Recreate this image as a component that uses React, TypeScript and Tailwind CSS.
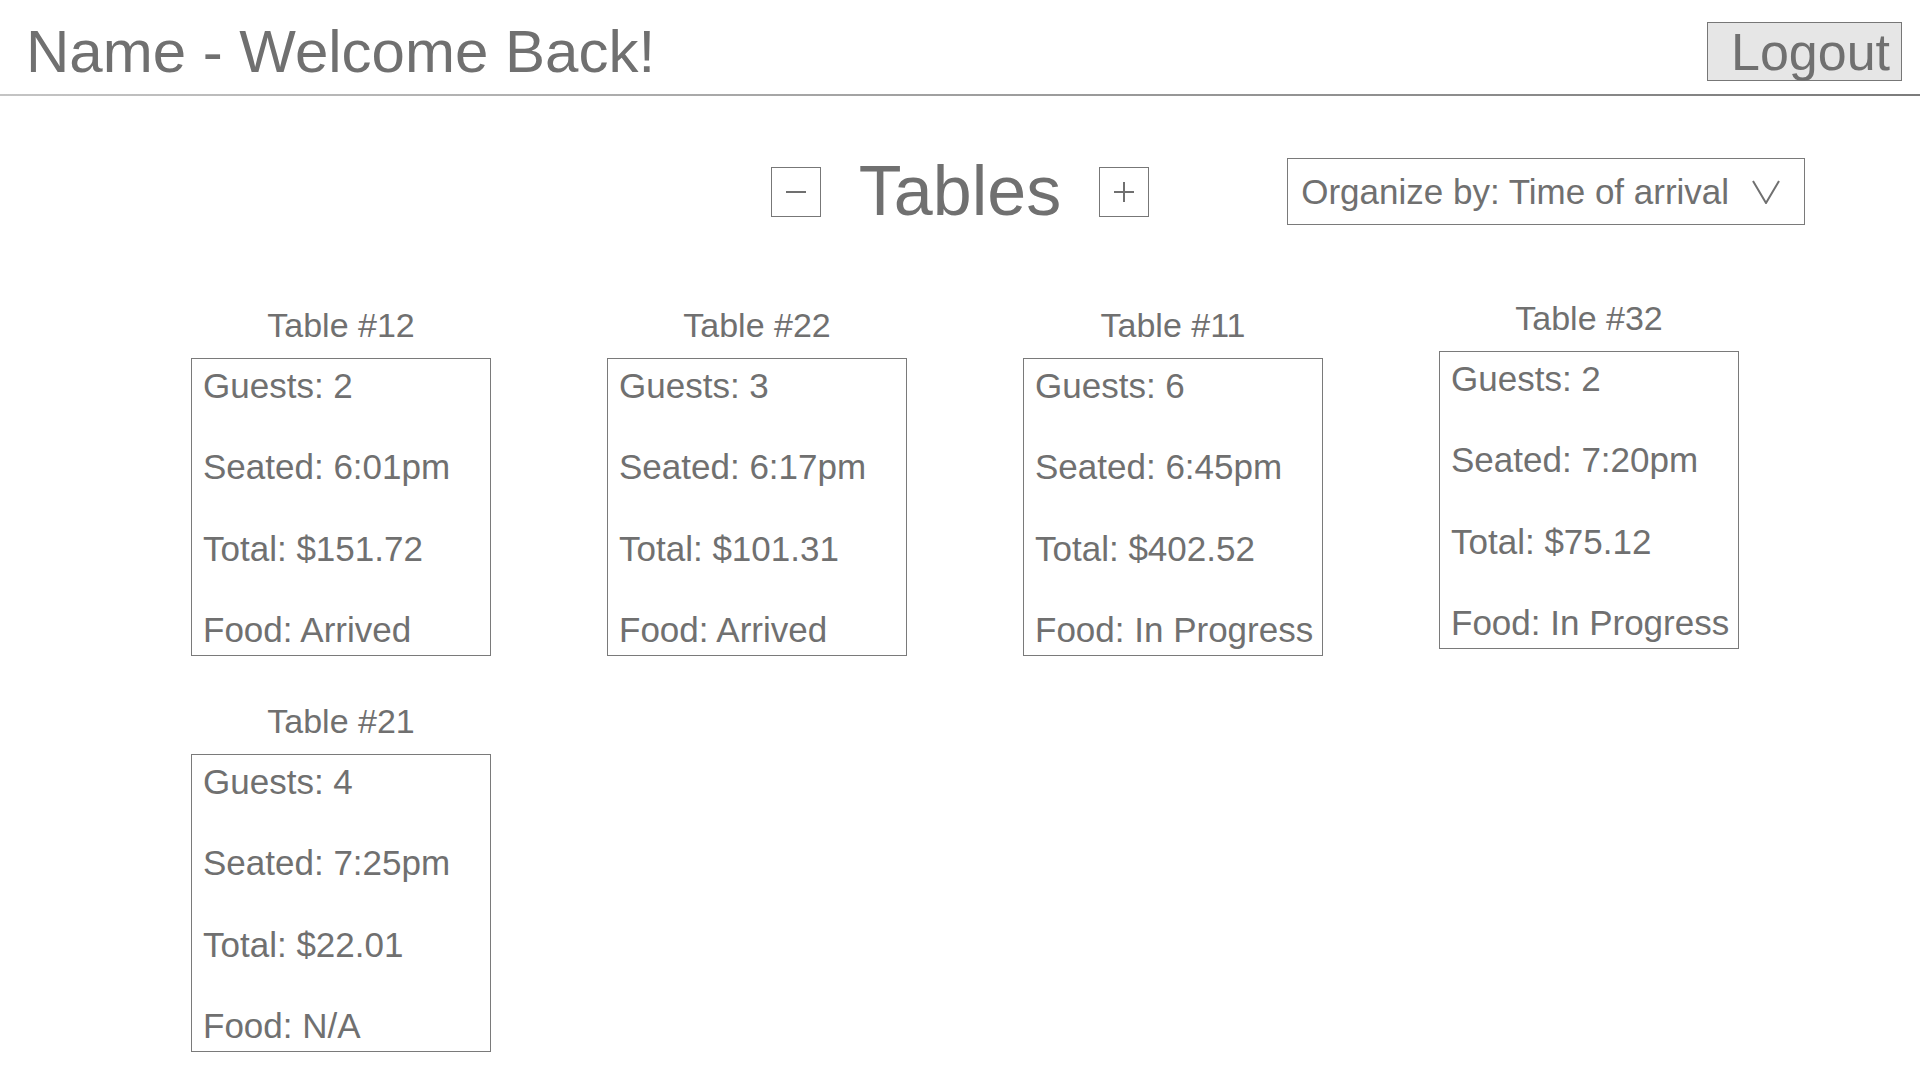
const TABLES = [
  { id: 12, guests: 2, seated: "6:01pm", total: "$151.72", food: "Arrived" },
  { id: 22, guests: 3, seated: "6:17pm", total: "$101.31", food: "Arrived" },
  { id: 11, guests: 6, seated: "6:45pm", total: "$402.52", food: "In Progress" },
  { id: 32, guests: 2, seated: "7:20pm", total: "$75.12", food: "In Progress" },
  { id: 21, guests: 4, seated: "7:25pm", total: "$22.01", food: "N/A" },
];

function TableCard({ table, raised }: { table: (typeof TABLES)[number]; raised?: boolean }) {
  return (
    <div className={raised ? "flex flex-col -mt-[7px]" : "flex flex-col"}>
      <div className="h-[40px] text-center text-[34px] leading-[40px]">Table #{table.id}</div>
      <div className="mt-[13px] flex h-[298px] w-[300px] flex-col justify-between border border-[#7a7a7a] px-[11px] pt-[7px] pb-[5px] text-[35px] leading-[40px] whitespace-nowrap">
        <div>Guests: {table.guests}</div>
        <div>Seated: {table.seated}</div>
        <div>Total: {table.total}</div>
        <div>Food: {table.food}</div>
      </div>
    </div>
  );
}

export default function App() {
  return (
    <div className="min-h-screen w-full bg-white font-['Liberation_Sans',Arial,sans-serif] text-[#707070]">
      <header className="flex h-[94px] items-start justify-between pt-[22px] pr-[18px] pl-[26px]">
        <h1 className="text-[60px] leading-[60px]">Name - Welcome Back!</h1>
        <button className="flex h-[59px] w-[195px] items-center border border-[#777777] bg-[#e6e6e6] pl-[23px] text-[52px] leading-none text-[#707070]">
          Logout
        </button>
      </header>
      <div className="h-[2px] w-full bg-gradient-to-r from-[#c4c4c4] to-[#7c7c7c]" />

      <div className="mt-[62px] grid grid-cols-[1fr_auto_1fr] items-center">
        <div />
        <div className="flex items-center">
          <button className="flex h-[50px] w-[50px] items-center justify-center border border-[#777777]">
            <svg width="22" height="22" viewBox="0 0 22 22">
              <line x1="1" y1="11" x2="21" y2="11" stroke="#707070" strokeWidth="2" />
            </svg>
          </button>
          <h2 className="mx-[38px] text-[70px] leading-[67px]">Tables</h2>
          <button className="flex h-[50px] w-[50px] items-center justify-center border border-[#777777]">
            <svg width="22" height="22" viewBox="0 0 22 22">
              <line x1="1" y1="11" x2="21" y2="11" stroke="#707070" strokeWidth="2" />
              <line x1="11" y1="1" x2="11" y2="21" stroke="#707070" strokeWidth="2" />
            </svg>
          </button>
        </div>
        <div className="pl-[138px]">
          <div className="flex h-[67px] w-[518px] items-center border border-[#7a7a7a] pl-[13px] text-[35px] leading-none whitespace-nowrap">
            <span>Organize by: Time of arrival</span>
            <svg className="ml-[22px]" width="30" height="24" viewBox="0 0 30 24">
              <polyline points="2,1 15,23 28,1" fill="none" stroke="#707070" strokeWidth="2" />
            </svg>
          </div>
        </div>
      </div>

      <div className="mt-[80px] grid grid-cols-[repeat(4,300px)] items-start gap-x-[116px] gap-y-[45px] pl-[191px] pb-[20px]">
        {TABLES.map((t, i) => (
          <TableCard key={t.id} table={t} raised={i === 3} />
        ))}
      </div>
    </div>
  );
}
